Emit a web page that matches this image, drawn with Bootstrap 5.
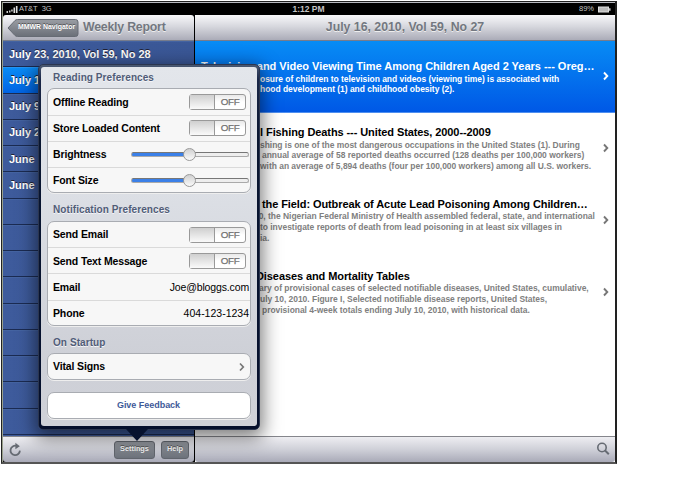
<!DOCTYPE html>
<html lang="en">
<head>
<meta charset="utf-8">
<meta name="viewport" content="width=device-width, initial-scale=1">
<title>MMWR Navigator</title>
<link href="https://cdn.jsdelivr.net/npm/bootstrap@5.3.0/dist/css/bootstrap.min.css" rel="stylesheet">
<style>
body{font-family:"Liberation Sans",Arial,sans-serif;background:#fff;line-height:1;font-weight:700;overflow:hidden}
.device{margin-top:1px;margin-left:1px;border:1px solid #222;border-right-width:2px;border-bottom:2px solid #555;width:616px;height:463px;padding:1px 0 0 1px;background:#b9bac0;box-shadow:inset 1px 0 #99a08c}
.status{height:12px;background:#000;color:#c4c4c4;font-size:8.5px;font-weight:700;padding:0 4px 0 3px}
.status .side{flex:1 1 0}
.status .carrier{font-size:7.5px;font-weight:400;margin-left:1px}
.pane-area{height:447px;background:#000}
.left-pane{width:191px;margin-right:1px}
.right-pane{background:#fff;min-width:0}
.bar-top{height:26px;background:linear-gradient(#f8f8fa,#d7d8de 45%,#abacb8);border-bottom:1px solid #777c8c;color:#727780;font-size:12.3px;text-shadow:0 1px #eee;border-radius:3px 3px 0 0}
.back{color:#fff;font-size:6.9px;text-shadow:0 -1px #555;width:72px;height:18px;margin-left:4px}
.back svg{left:0;top:0}
.back-label{padding-left:7px;letter-spacing:.04px}
.wk{letter-spacing:-.2px;margin-left:4px}
.issues{background:#3d5a9a;color:#fff;font-size:11px;text-shadow:0 -1px #223}
.issue{height:26.25px;padding-left:6px;border-bottom:1px solid #1b2b52;border-top:1px solid #4463a1;background:linear-gradient(90deg,#3e5b9c,#3a5796)}
.issue.on{background:linear-gradient(#0a8bf5,#0164e4);border-top-color:#2494f4}
.bar-bottom{height:26px;background:linear-gradient(#eeeef2,#cfd0d8 50%,#a9aab8);border-top:1px solid #85868c;border-radius:0 0 3px 3px}
.tool{height:18px;font-size:7.3px;color:#f4f4f4;border:1px solid #62666e;border-radius:3px;background:linear-gradient(#92969d,#6d727b);text-shadow:0 -1px #555;padding:0}
.tool.wide{width:41px;margin-right:6px}
.tool.slim{width:28px;margin-right:5px}
.story{height:71.8px;padding:14px 6px 0 6px;color:#808080;font-size:8.47px;letter-spacing:-.02px}
.story.on{background:linear-gradient(#078cf5,#0058e6);color:#fff;border-bottom:1px solid #4f8ff0;height:72px;padding-top:20px}
.story h2{font-size:11px;font-weight:700;letter-spacing:-.09px;margin:0;color:#000;line-height:11px;height:12px;white-space:nowrap}
.story.on h2{color:#fff;letter-spacing:-.02px}
.story .ln{height:10.7px;line-height:11px;white-space:nowrap}
.story .ln.first{margin-top:.7px}
.hid{overflow:hidden;display:flex;justify-content:flex-end;white-space:pre;flex:none}
.s58{width:58px}.s59{width:59px}.s61{width:61px}.s65{width:65px}.s55{width:55px}.s67{width:67px}
.chev{width:7px;height:10px;flex:none}
.story .chev{margin-top:16px}
.story.on .chev{margin-top:10px}
.text-col{width:398px}
.popover-box{left:38px;top:64px;width:222px;height:366px;border-radius:5px;background:linear-gradient(#4b5a73,#1a2748 4%,#091631 20%,#050f2c);border:1px solid #2b3650;padding:2px 2px 3px;box-shadow:0 5px 18px 3px rgba(0,0,0,.5)}
.sheet{height:359px;border-radius:3px;background:linear-gradient(#e3e6eb,#dcdfe5 35%,#ced0d7 80%,#cfd1d8);padding:0 6px 0 6px}
.tip{left:126px;top:429px;width:22px;height:12px}
.gt{font-size:10px;color:#505c77;letter-spacing:.08px;text-shadow:0 1px #f5f5f8;padding-left:6px;height:27.4px;padding-top:6px}
.gt.lead-gt{height:21.3px;padding-top:0}
.group{background:#f7f7f7;border:1px solid #a9acb2;border-radius:7px;box-shadow:0 1px #eee;color:#000;font-size:10.5px;letter-spacing:-.14px}
.opt{height:26.3px;padding:0 1px 0 5px}
.opt:first-child,.opt:last-child{height:25.3px}
.opt:only-child{height:24.3px}
.opt+.opt{border-top:1px solid #dadada}
.opt .val{font-weight:400}
.feedback{margin-top:12.7px}
.feedback .opt{font-size:9px;letter-spacing:-.03px;color:#3e5a99;padding-right:6px}
.sw{width:57px;height:16px;border:1px solid #999;border-radius:3px;background:linear-gradient(#e9e9e9,#fff 50%);margin-right:3px;font-size:9.8px;font-weight:400;color:#6c6c6c;letter-spacing:-.3px}
.sw i{width:25px;height:14px;background:linear-gradient(#cfcfcf,#fafafa);border-right:1px solid #999}
.sw b{font-weight:400;-webkit-text-stroke:.25px #777}
.track{width:118px;height:5px;border-radius:3px;background:linear-gradient(90deg,#3b80e8 50%,#eee 50%);border:1px solid #aaa;border-top-color:#777;position:relative}
.track i{position:absolute;left:51px;top:-5px;width:13px;height:13px;border-radius:50%;background:linear-gradient(#d0d0d0,#fafafa);border:1px solid #999}
</style>
<script src="https://cdn.jsdelivr.net/npm/bootstrap@5.3.0/dist/js/bootstrap.bundle.min.js"></script>
</head>
<body>
<div class="device">
  <div class="status d-flex align-items-center">
    <div class="side d-flex align-items-center"><svg width="12" height="8"><path d="M.5 7h1.5M3 6.5h1.5M5.2 5.5h1.5" stroke="#ccc" stroke-width="2"/><path d="M8.3 2.5V8M10.7 1V8" stroke="#ddd" stroke-width="1.6"/></svg><span class="carrier">AT&amp;T</span><span class="carrier ms-1">3G</span></div>
    <div>1:12 PM</div>
    <div class="side d-flex justify-content-end align-items-center"><span class="carrier me-1">89%</span><svg width="13" height="7"><rect x=".5" y="1" width="10" height="5" fill="#bbb" stroke="#ddd"/><path d="M11.8 2.2v2.6" stroke="#ccc" stroke-width="1.5"/></svg></div>
  </div>
  <div class="pane-area d-flex">
    <div class="left-pane d-flex flex-column">
      <div class="bar-top d-flex align-items-center">
        <div class="back position-relative d-flex align-items-center justify-content-center"><svg class="position-absolute" width="72" height="18"><defs><linearGradient id="bk" x2="0" y2="1"><stop stop-color="#9a9da3"/><stop offset="1" stop-color="#6a6f78"/></linearGradient></defs><path d="M1 9L8 1.5Q9 .5 10.500.5H68.500Q71 .5 71 3V15Q71 17.500 68.500 17.500H10.500Q9 17.500 8 16.500Z" fill="url(#bk)" stroke="#666b74"/></svg><span class="back-label position-relative">MMWR Navigator</span></div>
        <span class="wk">Weekly Report</span>
      </div>
      <div class="issues flex-grow-1 overflow-hidden">
        <div class="issue d-flex align-items-center">July 23, 2010, Vol 59, No 28</div>
        <div class="issue on d-flex align-items-center">July 1</div>
        <div class="issue d-flex align-items-center">July 9</div>
        <div class="issue d-flex align-items-center">July 2</div>
        <div class="issue d-flex align-items-center">June</div>
        <div class="issue d-flex align-items-center">June</div>
        <div class="issue"></div><div class="issue"></div><div class="issue"></div><div class="issue"></div><div class="issue"></div><div class="issue"></div><div class="issue"></div><div class="issue"></div><div class="issue"></div>
      </div>
      <div class="bar-bottom d-flex align-items-center">
        <svg class="ms-1 me-auto" width="16" height="16" viewBox="0 0 16 16"><path d="M9.500 3.900A4.700 4.700 0 1 0 12.900 8.600" fill="none" stroke="#666b73" stroke-width="1.800"/><path d="M8.400 .8L12.800 4.200L8.400 7.200Z" fill="#666b73"/></svg>
        <button class="tool wide btn fw-bold">Settings</button>
        <button class="tool slim btn fw-bold">Help</button>
      </div>
    </div>
    <div class="right-pane d-flex flex-column flex-grow-1">
      <div class="bar-top d-flex align-items-center justify-content-center">July 16, 2010, Vol 59, No 27</div>
      <div class="flex-grow-1">
        <div class="story on d-flex justify-content-between">
          <div class="text-col"><h2>Television and Video Viewing Time Among Children Aged 2 Years --- Oreg…</h2>
            <div class="ln first d-flex"><span class="hid s59"></span>osure of children to television and videos (viewing time) is associated with</div>
            <div class="ln d-flex"><span class="hid s59"></span>hood development (1) and childhood obesity (2).</div></div>
          <svg class="chev" viewBox="0 0 7 10"><path d="M2 1.500L5.300 5L2 8.500" fill="none" stroke="#fff" stroke-width="1.900"/></svg>
        </div>
        <div class="story d-flex justify-content-between">
          <div class="text-col"><h2 class="d-flex"><span class="hid s65">l </span>Fishing Deaths --- United States, 2000--2009</h2>
            <div class="ln first d-flex"><span class="hid s59"></span>shing is one of the most dangerous occupations in the United States (1). During</div>
            <div class="ln d-flex"><span class="hid s61"></span>annual average of 58 reported deaths occurred (128 deaths per 100,000 workers)</div>
            <div class="ln d-flex"><span class="hid s59"></span>with an average of 5,894 deaths (four per 100,000 workers) among all U.S. workers.</div></div>
          <svg class="chev" viewBox="0 0 7 10"><path d="M2 1.500L5.300 5L2 8.500" fill="none" stroke="#777" stroke-width="1.900"/></svg>
        </div>
        <div class="story d-flex justify-content-between">
          <div class="text-col"><h2 class="d-flex"><span class="hid s61"></span>the Field: Outbreak of Acute Lead Poisoning Among Children…</h2>
            <div class="ln first d-flex"><span class="hid s67">0, </span>the Nigerian Federal Ministry of Health assembled federal, state, and international</div>
            <div class="ln d-flex"><span class="hid s59"></span>to investigate reports of death from lead poisoning in at least six villages in</div>
            <div class="ln d-flex"><span class="hid s59"></span>ia.</div></div>
          <svg class="chev" viewBox="0 0 7 10"><path d="M2 1.500L5.300 5L2 8.500" fill="none" stroke="#777" stroke-width="1.900"/></svg>
        </div>
        <div class="story d-flex justify-content-between">
          <div class="text-col"><h2 class="d-flex"><span class="hid s55"></span>Diseases and Mortality Tables</h2>
            <div class="ln first d-flex"><span class="hid s58"></span>ary of provisional cases of selected notifiable diseases, United States, cumulative,</div>
            <div class="ln d-flex"><span class="hid s59">J</span>uly 10, 2010. Figure I, Selected notifiable disease reports, United States,</div>
            <div class="ln d-flex"><span class="hid s61"></span>provisional 4-week totals ending July 10, 2010, with historical data.</div></div>
          <svg class="chev" viewBox="0 0 7 10"><path d="M2 1.500L5.300 5L2 8.500" fill="none" stroke="#777" stroke-width="1.900"/></svg>
        </div>
      </div>
      <div class="bar-bottom d-flex align-items-center justify-content-end">
        <svg class="me-1" width="16" height="16" viewBox="0 0 16 16"><circle cx="7" cy="5.500" r="4.200" fill="none" stroke="#666b73" stroke-width="1.600"/><path d="M9.800 8.300L13.800 12.200" stroke="#666b73" stroke-width="2"/></svg>
      </div>
    </div>
  </div>
</div>
<div class="popover-box position-absolute">
  <div class="sheet">
    <div class="gt lead-gt d-flex align-items-center">Reading Preferences</div>
    <div class="group">
      <div class="opt d-flex align-items-center justify-content-between">Offline Reading<span class="sw d-flex align-items-center"><i></i><b class="flex-grow-1 text-center">OFF</b></span></div>
      <div class="opt d-flex align-items-center justify-content-between">Store Loaded Content<span class="sw d-flex align-items-center"><i></i><b class="flex-grow-1 text-center">OFF</b></span></div>
      <div class="opt d-flex align-items-center justify-content-between">Brightness<span class="track"><i></i></span></div>
      <div class="opt d-flex align-items-center justify-content-between">Font Size<span class="track"><i></i></span></div>
    </div>
    <div class="gt d-flex align-items-center">Notification Preferences</div>
    <div class="group">
      <div class="opt d-flex align-items-center justify-content-between">Send Email<span class="sw d-flex align-items-center"><i></i><b class="flex-grow-1 text-center">OFF</b></span></div>
      <div class="opt d-flex align-items-center justify-content-between">Send Text Message<span class="sw d-flex align-items-center"><i></i><b class="flex-grow-1 text-center">OFF</b></span></div>
      <div class="opt d-flex align-items-center justify-content-between">Email<span class="val">Joe@bloggs.com</span></div>
      <div class="opt d-flex align-items-center justify-content-between">Phone<span class="val" style="letter-spacing:0">404-123-1234</span></div>
    </div>
    <div class="gt d-flex align-items-center">On Startup</div>
    <div class="group"><div class="opt d-flex align-items-center justify-content-between">Vital Signs<svg class="chev me-1" viewBox="0 0 7 10"><path d="M2 1.500L5.300 5L2 8.500" fill="none" stroke="#777" stroke-width="1.700"/></svg></div></div>
    <div class="group feedback bg-white"><div class="opt d-flex align-items-center justify-content-center">Give Feedback</div></div>
  </div>
</div>
<svg class="tip position-absolute" viewBox="0 0 22 12"><path d="M0 0H22L11 12Z" fill="#07122e"/></svg>
</body>
</html>
